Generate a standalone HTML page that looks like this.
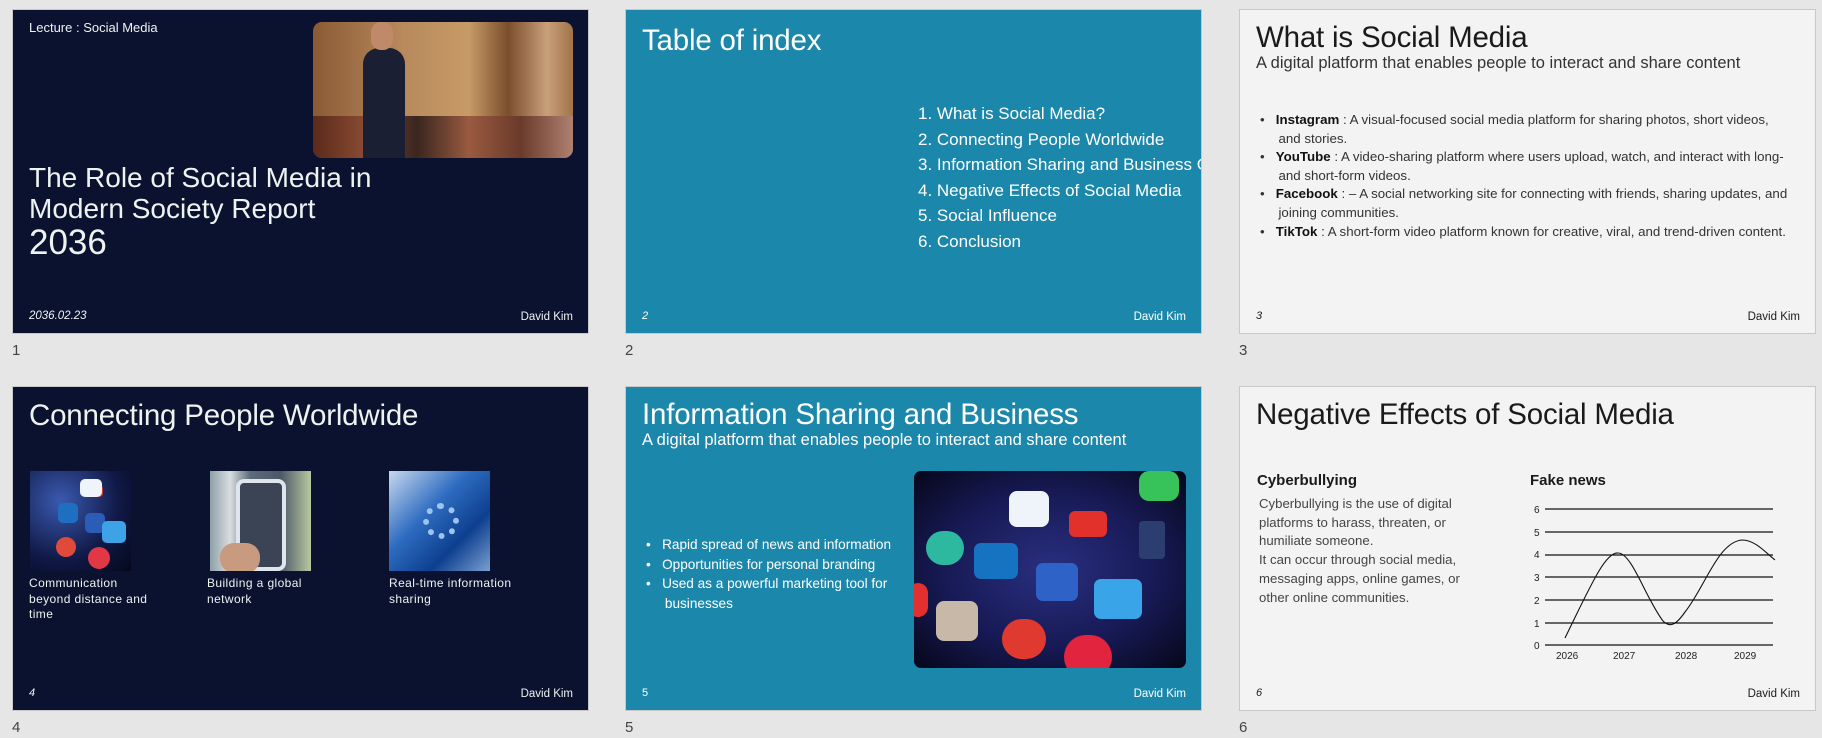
<!DOCTYPE html>
<html><head><meta charset="utf-8"><style>
*{margin:0;padding:0;box-sizing:border-box}
body{width:1822px;height:738px;background:#e6e6e6;font-family:"Liberation Sans",sans-serif;position:relative;overflow:hidden}
.s{position:absolute;width:577px;height:325px;overflow:hidden;border:1px solid #c8c8c8}
.navy{background:#0a1230;color:#eef3f0}
.teal{background:#1b87ab;color:#fff}
.light{background:#f3f3f3;color:#1a1a1a}
.a{position:absolute;white-space:nowrap}
.lbl{position:absolute;font-size:15px;color:#444}
.ttl{font-size:29.5px;font-weight:300;letter-spacing:-0.2px}
.ft{font-size:11.5px}
.pg{font-size:11px;font-style:italic}
ul{list-style:none}
</style></head><body>

<!-- slide 1 -->
<div class="s navy" style="left:12px;top:9px">
 <div class="a" style="left:16px;top:10px;font-size:13px">Lecture : Social Media</div>
 <div class="a" style="left:300px;top:12px;width:260px;height:136px;border-radius:9px;overflow:hidden;background:linear-gradient(90deg,#8a5a35 0%,#b88a5c 35%,#c79a66 60%,#7a4e2c 75%,#c8a07a 90%,#a27349 100%)">
   <div style="position:absolute;left:0;bottom:0;width:100%;height:42px;background:linear-gradient(90deg,#5a2a1a,#8a4b33,#3a2620,#9a5a40,#6a3a2a,#b08070)"></div>
   <div style="position:absolute;left:50px;top:26px;width:42px;height:110px;background:#1b1f33;border-radius:16px 16px 0 0"></div>
   <div style="position:absolute;left:58px;top:0;width:22px;height:28px;background:#c08a6a;border-radius:10px"></div>
 </div>
 <div class="a" style="left:16px;top:152px;font-size:28px;font-weight:300;line-height:31px">The Role of Social Media in<br>Modern Society Report</div>
 <div class="a" style="left:16px;top:213px;font-size:35px;font-weight:300">2036</div>
 <div class="a pg" style="left:16px;top:300px;font-size:11.5px">2036.02.23</div>
 <div class="a ft" style="right:15px;top:301px">David Kim</div>
</div>
<div class="lbl" style="left:12px;top:342px">1</div>

<!-- slide 2 -->
<div class="s teal" style="left:625px;top:9px">
 <div class="a ttl" style="left:16px;top:14px">Table of index</div>
 <div class="a" style="left:292px;top:91px;font-size:17px;line-height:25.5px">1. What is Social Media?<br>2. Connecting People Worldwide<br>3. Information Sharing and Business Growth<br>4. Negative Effects of Social Media<br>5. Social Influence<br>6. Conclusion</div>
 <div class="a pg" style="left:16px;top:300px">2</div>
 <div class="a ft" style="right:15px;top:301px">David Kim</div>
</div>
<div class="lbl" style="left:625px;top:342px">2</div>

<!-- slide 3 -->
<div class="s light" style="left:1239px;top:9px">
 <div class="a ttl" style="left:16px;top:11px">What is Social Media</div>
 <div class="a" style="left:16px;top:44px;font-size:16.5px;color:#333">A digital platform that enables people to interact and share content</div>
 <ul class="a" style="left:20px;top:101px;width:555px;white-space:nowrap;font-size:13.3px;line-height:18.6px;color:#333">
  <li>•&nbsp;&nbsp; <b style="color:#111;font-weight:600">Instagram</b> : A visual-focused social media platform for sharing photos, short videos,<br>&nbsp;&nbsp;&nbsp;&nbsp; and stories.</li>
  <li>•&nbsp;&nbsp; <b style="color:#111;font-weight:600">YouTube</b> : A video-sharing platform where users upload, watch, and interact with long-<br>&nbsp;&nbsp;&nbsp;&nbsp; and short-form videos.</li>
  <li>•&nbsp;&nbsp; <b style="color:#111;font-weight:600">Facebook</b> : – A social networking site for connecting with friends, sharing updates, and<br>&nbsp;&nbsp;&nbsp;&nbsp; joining communities.</li>
  <li>•&nbsp;&nbsp; <b style="color:#111;font-weight:600">TikTok</b> : A short-form video platform known for creative, viral, and trend-driven content.</li>
 </ul>
 <div class="a pg" style="left:16px;top:300px">3</div>
 <div class="a ft" style="right:15px;top:301px">David Kim</div>
</div>
<div class="lbl" style="left:1239px;top:342px">3</div>

<!-- slide 4 -->
<div class="s navy" style="left:12px;top:386px">
 <div class="a ttl" style="left:16px;top:12px">Connecting People Worldwide</div>
 <div class="a" style="left:17px;top:84px;width:101px;height:100px;overflow:hidden;background:radial-gradient(circle at 30% 30%,#3a5ab0 0,#101845 60%,#05081c 100%)">
   <div style="position:absolute;left:28px;top:32px;width:20px;height:20px;background:#1e6fc0;border-radius:5px"></div>
   <div style="position:absolute;left:55px;top:42px;width:20px;height:20px;background:#2a5cb8;border-radius:5px"></div>
   <div style="position:absolute;left:55px;top:14px;width:18px;height:12px;background:#d8332a;border-radius:4px"></div>
   <div style="position:absolute;left:58px;top:76px;width:22px;height:22px;background:#e23744;border-radius:11px"></div>
   <div style="position:absolute;left:26px;top:66px;width:20px;height:20px;background:#e04a3a;border-radius:10px"></div>
   <div style="position:absolute;left:72px;top:50px;width:24px;height:22px;background:#3ea2e6;border-radius:5px"></div>
   <div style="position:absolute;left:50px;top:8px;width:22px;height:18px;background:#eef4fa;border-radius:5px"></div>
 </div>
 <div class="a" style="left:197px;top:84px;width:101px;height:100px;overflow:hidden;background:linear-gradient(90deg,#8ea0a8,#d8dde0 20%,#5c6a7a 40%,#4c5868 70%,#b8c9a0 100%)">
   <div style="position:absolute;left:26px;top:8px;width:50px;height:92px;background:#3a4454;border:4px solid #dfe5ec;border-radius:8px"></div>
   <div style="position:absolute;left:10px;top:72px;width:40px;height:30px;background:#c89a80;border-radius:14px"></div>
 </div>
 <div class="a" style="left:376px;top:84px;width:101px;height:100px;overflow:hidden;background:linear-gradient(135deg,#c8d8ee 0,#2e6cc0 40%,#0d3f8f 70%,#7aa0d0 100%)">
   <div style="position:absolute;left:34px;top:32px;width:36px;height:36px;border-radius:18px;border:6px dotted #9cc4ee"></div>
 </div>
 <div class="a" style="left:16px;top:189px;font-size:12px;line-height:15.5px;font-weight:300;letter-spacing:0.4px">Communication<br>beyond distance and<br>time</div>
 <div class="a" style="left:194px;top:189px;font-size:12px;line-height:15.5px;font-weight:300;letter-spacing:0.4px">Building a global<br>network</div>
 <div class="a" style="left:376px;top:189px;font-size:12px;line-height:15.5px;font-weight:300;letter-spacing:0.4px">Real-time information<br>sharing</div>
 <div class="a pg" style="left:16px;top:300px">4</div>
 <div class="a ft" style="right:15px;top:301px">David Kim</div>
</div>
<div class="lbl" style="left:12px;top:719px">4</div>

<!-- slide 5 -->
<div class="s teal" style="left:625px;top:386px">
 <div class="a ttl" style="left:16px;top:11px">Information Sharing and Business</div>
 <div class="a" style="left:16px;top:44px;font-size:16.5px">A digital platform that enables people to interact and share content</div>
 <ul class="a" style="left:20px;top:148px;font-size:13.6px;line-height:19.5px">
  <li>•&nbsp;&nbsp; Rapid spread of news and information</li>
  <li>•&nbsp;&nbsp; Opportunities for personal branding</li>
  <li>•&nbsp;&nbsp; Used as a powerful marketing tool for<br>&nbsp;&nbsp;&nbsp;&nbsp; businesses</li>
 </ul>
 <div class="a" style="left:288px;top:84px;width:272px;height:197px;border-radius:7px;overflow:hidden;background:radial-gradient(ellipse at 50% 50%,#2a2f80 0,#171a55 55%,#06071a 100%)">
   <div style="position:absolute;left:95px;top:20px;width:40px;height:36px;background:#eef4fa;border-radius:8px"></div>
   <div style="position:absolute;left:155px;top:40px;width:38px;height:26px;background:#e2312a;border-radius:6px"></div>
   <div style="position:absolute;left:225px;top:50px;width:26px;height:38px;background:#2c3e70;border-radius:4px"></div>
   <div style="position:absolute;left:225px;top:0px;width:40px;height:30px;background:#38c25a;border-radius:10px"></div>
   <div style="position:absolute;left:12px;top:60px;width:38px;height:34px;background:#2cb9a0;border-radius:19px"></div>
   <div style="position:absolute;left:60px;top:72px;width:44px;height:36px;background:#1573c2;border-radius:7px"></div>
   <div style="position:absolute;left:122px;top:92px;width:42px;height:38px;background:#2f62c6;border-radius:7px"></div>
   <div style="position:absolute;left:180px;top:108px;width:48px;height:40px;background:#3aa4e8;border-radius:7px"></div>
   <div style="position:absolute;left:22px;top:130px;width:42px;height:40px;background:#c8b8a8;border-radius:8px"></div>
   <div style="position:absolute;left:88px;top:148px;width:44px;height:40px;background:#e03a30;border-radius:22px"></div>
   <div style="position:absolute;left:150px;top:164px;width:48px;height:44px;background:#e3243e;border-radius:24px"></div>
   <div style="position:absolute;left:-6px;top:112px;width:20px;height:34px;background:#e23030;border-radius:10px"></div>
 </div>
 <div class="a" style="left:16px;top:300px;font-size:11px">5</div>
 <div class="a ft" style="right:15px;top:301px">David Kim</div>
</div>
<div class="lbl" style="left:625px;top:719px">5</div>

<!-- slide 6 -->
<div class="s light" style="left:1239px;top:386px">
 <div class="a ttl" style="left:16px;top:11px">Negative Effects of Social Media</div>
 <div class="a" style="left:17px;top:85px;font-size:15px;font-weight:600">Cyberbullying</div>
 <div class="a" style="left:19px;top:108px;font-size:13.2px;line-height:18.7px;color:#444">Cyberbullying is the use of digital<br>platforms to harass, threaten, or<br>humiliate someone.<br>It can occur through social media,<br>messaging apps, online games, or<br>other online communities.</div>
 <div class="a" style="left:290px;top:85px;font-size:15px;font-weight:600">Fake news</div>
 <svg class="a" style="left:280px;top:110px" width="290" height="170" viewBox="0 0 290 170">
  <g stroke="#111" stroke-width="1.2">
   <line x1="25" y1="12" x2="253" y2="12"/><line x1="25" y1="35" x2="253" y2="35"/><line x1="25" y1="58" x2="253" y2="58"/><line x1="25" y1="80" x2="253" y2="80"/><line x1="25" y1="103" x2="253" y2="103"/><line x1="25" y1="126" x2="253" y2="126"/><line x1="25" y1="148" x2="253" y2="148"/>
  </g>
  <g font-family="Liberation Sans,sans-serif" font-size="10" fill="#222">
   <text x="14" y="16">6</text><text x="14" y="39">5</text><text x="14" y="61">4</text><text x="14" y="84">3</text><text x="14" y="107">2</text><text x="14" y="130">1</text><text x="14" y="152">0</text>
   <text x="36" y="162">2026</text><text x="93" y="162">2027</text><text x="155" y="162">2028</text><text x="214" y="162">2029</text>
  </g>
  <path d="M45 141 C70 90,85 55,98 56 C112 56,125 100,143 124 C150 131,156 128,165 115 C185 90,198 45,222 43 C235 43,245 55,255 63" fill="none" stroke="#111" stroke-width="1.1"/>
 </svg>
 <div class="a pg" style="left:16px;top:300px">6</div>
 <div class="a ft" style="right:15px;top:301px">David Kim</div>
</div>
<div class="lbl" style="left:1239px;top:719px">6</div>

</body></html>
